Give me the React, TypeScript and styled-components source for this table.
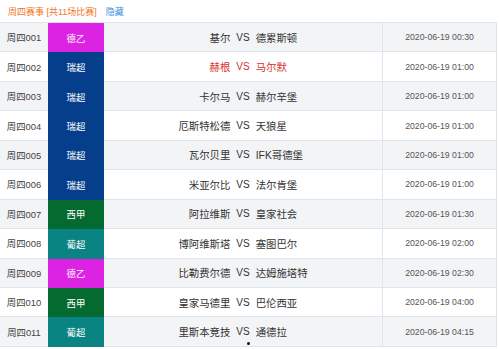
import React from "react";
import styled, { createGlobalStyle } from "styled-components";

const Global = createGlobalStyle`
  html, body { margin: 0; padding: 0; background: #ffffff; }
  body { font-family: "Liberation Sans", "Noto Sans CJK SC", sans-serif; }
`;

const Page = styled.div`
  width: 499px;
  height: 349px;
  overflow: hidden;
  background: #fff;
  position: relative;
`;

const Header = styled.div`
  height: 22px;
  display: flex;
  align-items: center;
  padding: 1px 0 0 8px;
  box-sizing: border-box;
  font-size: 9px;
  gap: 9px;
`;

const Title = styled.span`
  color: #f07828;
`;

const Toggle = styled.span`
  color: #3a8ee0;
`;

const Table = styled.div`
  width: 497px;
  border-top: 1px solid #dde6ee;
  display: flex;
  flex-direction: column;
`;

const Row = styled.div<{ $alt: boolean }>`
  height: 29.45px;
  box-sizing: border-box;
  display: grid;
  grid-template-columns: 48px 56px 279px 1fr;
  border-bottom: 1px solid #dde6ee;
  background: ${(p) => (p.$alt ? "#f3f4f6" : "#ffffff")};
`;

const Code = styled.div`
  display: flex;
  align-items: center;
  justify-content: center;
  font-size: 9.4px;
  color: #444;
`;

const League = styled.div<{ $bg: string }>`
  display: flex;
  align-items: center;
  justify-content: center;
  background: ${(p) => p.$bg};
  color: #fff;
  font-size: 9.4px;
  margin-bottom: -1px;
`;

const Match = styled.div<{ $hot: boolean }>`
  display: grid;
  grid-template-columns: 1fr auto 1fr;
  align-items: center;
  column-gap: 6px;
  font-size: 10.4px;
  color: ${(p) => (p.$hot ? "#d9312b" : "#333")};
  border-right: 1px solid #dde6ee;
`;

const Home = styled.span`
  text-align: right;
`;

const Vs = styled.span`
  font-size: 10px;
`;

const Away = styled.span`
  text-align: left;
`;

const Time = styled.div`
  display: flex;
  align-items: center;
  justify-content: center;
  font-size: 8.7px;
  color: #555;
  border-right: 1px solid #dde6ee;
`;

const Dot = styled.div`
  position: absolute;
  left: 247px;
  top: 342px;
  width: 3px;
  height: 3px;
  border-radius: 50%;
  background: #111;
`;

const colors: Record<string, string> = {
  德乙: "#dc22e2",
  瑞超: "#053f8c",
  西甲: "#046a30",
  葡超: "#0a8383",
};

const rows = [
  ["周四001", "德乙", "基尔", "德累斯顿", "2020-06-19 00:30"],
  ["周四002", "瑞超", "赫根", "马尔默", "2020-06-19 01:00"],
  ["周四003", "瑞超", "卡尔马", "赫尔辛堡", "2020-06-19 01:00"],
  ["周四004", "瑞超", "厄斯特松德", "天狼星", "2020-06-19 01:00"],
  ["周四005", "瑞超", "瓦尔贝里", "IFK哥德堡", "2020-06-19 01:00"],
  ["周四006", "瑞超", "米亚尔比", "法尔肯堡", "2020-06-19 01:00"],
  ["周四007", "西甲", "阿拉维斯", "皇家社会", "2020-06-19 01:30"],
  ["周四008", "葡超", "博阿维斯塔", "塞图巴尔", "2020-06-19 02:00"],
  ["周四009", "德乙", "比勒费尔德", "达姆施塔特", "2020-06-19 02:30"],
  ["周四010", "西甲", "皇家马德里", "巴伦西亚", "2020-06-19 04:00"],
  ["周四011", "葡超", "里斯本竞技", "通德拉", "2020-06-19 04:15"],
];

export default function App() {
  return (
    <Page>
      <Global />
      <Header>
        <Title>周四赛事 [共11场比赛]</Title>
        <Toggle>隐藏</Toggle>
      </Header>
      <Table>
        {rows.map((r, i) => (
          <Row key={r[0]} $alt={i % 2 === 0}>
            <Code>{r[0]}</Code>
            <League $bg={colors[r[1]]}>{r[1]}</League>
            <Match $hot={i === 1}>
              <Home>{r[2]}</Home>
              <Vs>VS</Vs>
              <Away>{r[3]}</Away>
            </Match>
            <Time>{r[4]}</Time>
          </Row>
        ))}
      </Table>
      <Dot />
    </Page>
  );
}
